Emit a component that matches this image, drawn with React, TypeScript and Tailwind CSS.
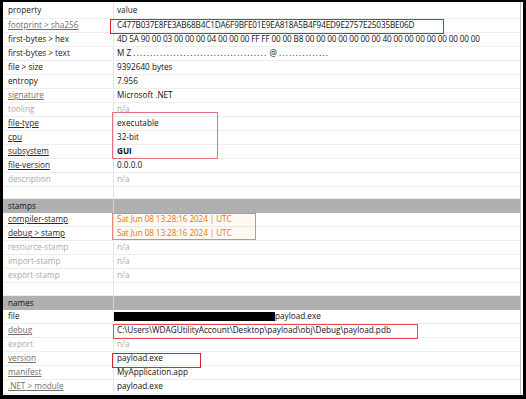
import React from "react";

type Row = {
  label?: string;
  value?: React.ReactNode;
  kind?: "head" | "plain" | "link" | "linkDim" | "off" | "section" | "blank";
  h?: string;
};

const dots = (n: number) => ".".repeat(n);

const rows: Row[] = [
  {
    label: "footprint > sha256",
    value: <span className="tracking-[-0.15px]">C477B037E8FE3AB68B4C1DA6F9BFE01E9EA818A5B4F94ED9E2757E25035BE06D</span>,
    kind: "linkDim",
  },
  {
    label: "first-bytes > hex",
    value: (
      <span className="tracking-[-0.15px]">
        4D 5A 90 00 03 00 00 00 04 00 00 00 FF FF 00 00 B8 00 00 00 00 00 00 00 40 00 00 00 00 00 00 00 00
      </span>
    ),
    kind: "plain",
  },
  {
    label: "first-bytes > text",
    value: (
      <span>
        M Z <span className="tracking-[1.2px]">{dots(40)}</span> @ <span className="tracking-[1.2px]">{dots(15)}</span>
      </span>
    ),
    kind: "plain",
  },
  { label: "file > size", value: "9392640 bytes", kind: "plain" },
  { label: "entropy", value: "7.956", kind: "plain" },
  { label: "signature", value: "Microsoft .NET", kind: "linkDim" },
  { label: "tooling", value: "n/a", kind: "off" },
  { label: "file-type", value: "executable", kind: "link" },
  { label: "cpu", value: "32-bit", kind: "link" },
  { label: "subsystem", value: <span className="font-bold">GUI</span>, kind: "link" },
  { label: "file-version", value: "0.0.0.0", kind: "link" },
  { label: "description", value: "n/a", kind: "off" },
  { kind: "blank", h: "h-[12px]" },
  { label: "stamps", kind: "section" },
  { label: "compiler-stamp", value: <span className="text-[#e0750f] tracking-[-0.1px]">Sat Jun 08 13:28:16 2024 | UTC</span>, kind: "link" },
  { label: "debug > stamp", value: <span className="text-[#e0750f] tracking-[-0.1px]">Sat Jun 08 13:28:16 2024 | UTC</span>, kind: "link" },
  { label: "resource-stamp", value: "n/a", kind: "off" },
  { label: "import-stamp", value: "n/a", kind: "off" },
  { label: "export-stamp", value: "n/a", kind: "off" },
  { kind: "blank", h: "h-[13px]" },
  { label: "names", kind: "section" },
  {
    label: "file",
    value: (
      <span className="flex items-center">
        <span className="inline-block ml-[-3px] w-[161px] h-[9px] bg-black" />
        payload.exe
      </span>
    ),
    kind: "plain",
  },
  { label: "debug", value: "C:\\Users\\WDAGUtilityAccount\\Desktop\\payload\\obj\\Debug\\payload.pdb", kind: "linkDim" },
  { label: "export", value: "n/a", kind: "off" },
  { label: "version", value: "payload.exe", kind: "linkDim" },
  { label: "manifest", value: "MyApplication.app", kind: "linkDim" },
  { label: ".NET > module", value: "payload.exe", kind: "linkDim" },
];

function TableRow({ row }: { row: Row }) {
  if (row.kind === "section") {
    return (
      <div className="flex h-[14px] bg-[#b0b0b0] text-[#111]">
        <div className="w-[111px] border-r border-[#d6d6d6] pl-[5px] flex items-center">{row.label}</div>
        <div className="flex-1" />
      </div>
    );
  }
  if (row.kind === "blank") {
    return (
      <div className={`flex ${row.h} border-b border-[#ededed]`}>
        <div className="w-[111px] border-r border-[#e4e4e4]" />
        <div className="flex-1" />
      </div>
    );
  }
  const labelCls =
    row.kind === "link"
      ? "text-[#2a2a2a] underline underline-offset-1"
      : row.kind === "linkDim"
        ? "text-[#707070] underline underline-offset-1"
        : row.kind === "off"
          ? "text-[#aaaaaa]"
          : "text-[#1a1a1a]";
  const valueCls = row.kind === "off" ? "text-[#aaaaaa]" : "text-[#111]";
  return (
    <div className="flex h-[14px] border-b border-[#ededed]">
      <div className={`w-[111px] shrink-0 border-r border-[#e4e4e4] pl-[5px] flex items-center whitespace-nowrap ${labelCls}`}>
        {row.label}
      </div>
      <div className={`flex-1 pl-[3px] flex items-center whitespace-nowrap overflow-hidden ${valueCls}`}>{row.value}</div>
    </div>
  );
}

export default function App() {
  return (
    <div
      className="relative w-[526px] h-[399px] bg-white border-t-2 border-l-[3px] border-r-[3px] border-b-4 border-black text-[8.2px] leading-none"
      style={{ fontFamily: '"Open Sans", "Noto Sans", sans-serif' }}
    >
      <div className="w-[518px] h-full border-r border-[#c4c4c4]">
        <div className="flex h-[17px] border-b border-[#ededed]">
          <div className="w-[111px] border-r border-[#e4e4e4] pl-[5px] flex items-center text-[#1a1a1a]">property</div>
          <div className="flex-1 pl-[3px] flex items-center text-[#1a1a1a]">value</div>
        </div>
        {rows.map((r, i) => (
          <TableRow key={i} row={r} />
        ))}
      </div>

      {/* highlight boxes */}
      <div className="absolute left-[107px] top-[17px] w-[334px] h-[15px] border border-[#e02020]" />
      <div className="absolute left-[109px] top-[110px] w-[106px] h-[47px] border border-[#e8707c]" />
      <div className="absolute left-[109px] top-[211px] w-[144px] h-[27px] border border-[#ee8080] bg-[#ff9a3c]/[0.06]" />
      <div className="absolute left-[110px] top-[322px] w-[305px] h-[15px] border border-[#e84858]" />
      <div className="absolute left-[109px] top-[351px] w-[89px] h-[15px] border border-[#e02030]" />
    </div>
  );
}
